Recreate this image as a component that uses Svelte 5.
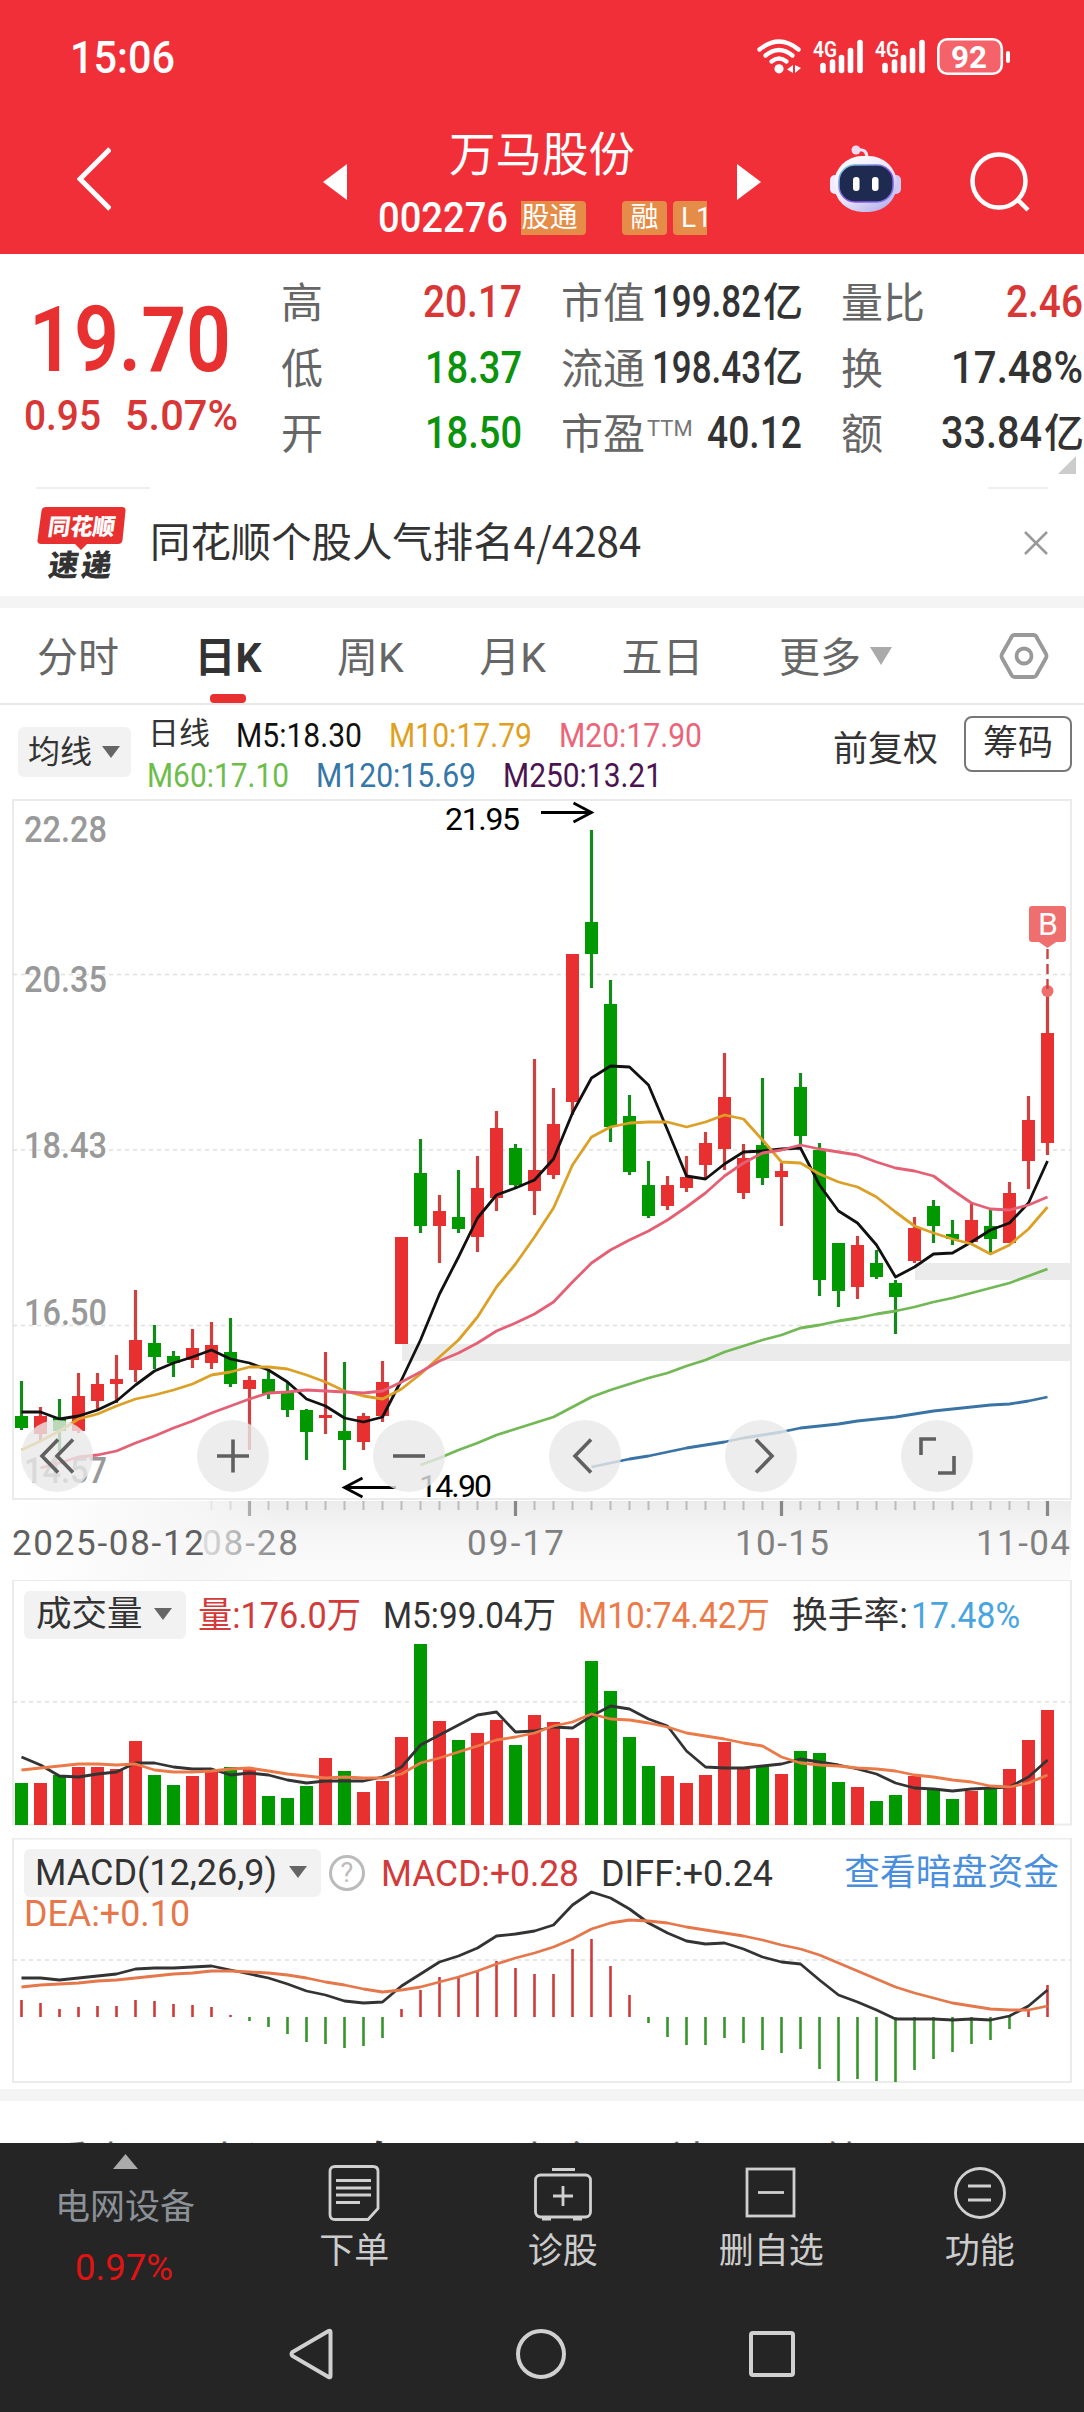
<script>
    const RED = '#e93030';
    const GREEN = '#009900';
    const STEP = 19;
    const START = 21.5;

    const stats = [
        [
            { label: '高', value: '20.17', width: 99, tone: 'red' },
            { label: '低', value: '18.37', width: 97, tone: 'green' },
            { label: '开', value: '18.50', width: 97, tone: 'green' },
        ],
        [
            { label: '市值', value: '199.82', width: 109, unit: '亿' },
            { label: '流通', value: '198.43', width: 109, unit: '亿' },
            { label: '市盈', sup: 'TTM', value: '40.12', width: 95 },
        ],
        [
            { label: '量比', value: '2.46', width: 77, tone: 'red' },
            { label: '换', value: '17.48%', width: 132 },
            { label: '额', value: '33.84', width: 101, unit: '亿' },
        ],
    ];

    const tabs = ['分时', '日K', '周K', '月K', '五日', '更多'];
    const infoTabs = ['看点', '资讯', '盘口', '资金', '社区', '简况(F10)'];

    const averages = [
        [
            { text: 'M5:18.30', width: 126, color: '#111111' },
            { text: 'M10:17.79', width: 143, color: '#e0a020' },
            { text: 'M20:17.90', width: 143, color: '#eb6478' },
        ],
        [
            { text: 'M60:17.10', width: 142, color: '#6dbd4b' },
            { text: 'M120:15.69', width: 160, color: '#3577a8' },
            { text: 'M250:13.21', width: 159, color: '#4b1450' },
        ],
    ];

    const priceLabels = [
        ['22.28', 43],
        ['20.35', 193],
        ['18.43', 359],
        ['16.50', 526],
        ['14.57', 684],
    ];

    // high, body top, body bottom, low, up
    const candles = [
        [582, 617, 629, 631, 0], [608, 617, 635, 641, 1], [600, 619, 632, 652, 0],
        [574, 597, 632, 634, 1], [574, 585, 602, 610, 1], [556, 580, 585, 604, 1],
        [491, 541, 571, 583, 1], [526, 544, 558, 570, 0], [552, 557, 564, 578, 0],
        [530, 549, 561, 569, 1], [523, 546, 564, 570, 1], [519, 553, 585, 588, 0],
        [577, 581, 590, 651, 1], [572, 580, 595, 600, 0], [584, 593, 611, 618, 0],
        [610, 611, 633, 661, 0], [553, 616, 619, 635, 1], [563, 632, 641, 671, 0],
        [614, 617, 643, 651, 1], [562, 583, 617, 623, 1], [438, 438, 545, 545, 1],
        [340, 374, 427, 434, 0], [396, 412, 427, 464, 1], [371, 418, 430, 434, 0],
        [357, 389, 438, 453, 1], [312, 329, 399, 412, 1], [345, 349, 386, 388, 0],
        [260, 371, 392, 416, 1], [289, 325, 376, 380, 1], [155, 155, 303, 316, 1],
        [31, 123, 155, 189, 0], [181, 205, 328, 343, 0], [296, 317, 373, 376, 0],
        [362, 386, 417, 419, 0], [377, 386, 407, 411, 1], [357, 378, 389, 393, 1],
        [333, 344, 366, 379, 1], [254, 298, 350, 371, 1], [345, 359, 394, 400, 1],
        [279, 346, 379, 386, 0], [364, 372, 378, 427, 1], [274, 288, 337, 345, 0],
        [344, 351, 481, 497, 0], [444, 444, 492, 508, 0], [437, 446, 488, 500, 1],
        [451, 464, 478, 480, 0], [481, 484, 498, 535, 0], [418, 429, 462, 464, 1],
        [401, 407, 427, 444, 0], [421, 435, 440, 446, 0], [403, 421, 443, 445, 1],
        [411, 427, 440, 454, 0], [383, 394, 444, 444, 1], [297, 321, 362, 390, 1],
        [193, 234, 344, 356, 1],
    ];

    const ma5 = [613, 613, 620, 617, 611, 602, 586, 572, 564, 558, 551, 560, 564, 571, 583, 600, 607, 619, 623, 618, 581, 541, 495, 458, 419, 396, 389, 381, 360, 314, 279, 267, 268, 286, 331, 377, 380, 365, 353, 352, 350, 349, 386, 412, 424, 446, 478, 468, 455, 454, 443, 431, 424, 404, 362];
    const ma10 = [651, 642, 632, 620, 615, 607, 600, 596, 591, 585, 576, 573, 568, 568, 570, 576, 583, 592, 597, 600, 590, 575, 558, 541, 518, 488, 465, 438, 409, 366, 338, 328, 324, 323, 323, 328, 323, 316, 320, 341, 363, 364, 375, 383, 388, 398, 413, 427, 434, 440, 445, 455, 446, 430, 408];
    const ma20 = [669, 664, 658, 656, 652, 644, 637, 629, 622, 614, 607, 600, 594, 593, 591, 592, 593, 594, 592, 583, 573, 562, 554, 544, 532, 524, 515, 503, 483, 464, 451, 441, 432, 421, 408, 394, 377, 364, 354, 351, 346, 350, 353, 356, 363, 369, 372, 377, 391, 404, 410, 411, 406, 398];
    const ma60 = [666, 659, 651, 644, 636, 630, 624, 618, 608, 598, 591, 585, 579, 574, 567, 561, 553, 547, 541, 536, 529, 526, 522, 519, 515, 512, 508, 503, 499, 494, 489, 484, 477, 470];
    const ma120 = [668, 664, 660, 657, 653, 649, 646, 643, 639, 636, 633, 629, 627, 625, 622, 620, 618, 615, 612, 610, 608, 606, 605, 602, 598];

    const volumes = [42, 42, 50, 58, 58, 56, 84, 50, 40, 49, 56, 58, 56, 29, 27, 39, 67, 54, 33, 44, 88, 181, 104, 85, 92, 105, 80, 110, 103, 87, 164, 134, 88, 59, 49, 42, 50, 83, 56, 59, 51, 74, 72, 43, 38, 24, 30, 49, 35, 26, 34, 36, 56, 85, 115];
    const vol5 = [177, 185, 196, 197, 194, 192, 183, 183, 187, 189, 189, 195, 193, 195, 200, 203, 201, 201, 201, 197, 187, 165, 155, 145, 135, 132, 152, 151, 147, 148, 136, 126, 129, 139, 146, 171, 187, 188, 188, 186, 184, 179, 182, 185, 189, 194, 203, 208, 209, 211, 209, 208, 207, 197, 180];
    const vol10 = [190, 188, 186, 184, 184, 185, 184, 190, 192, 192, 191, 189, 188, 191, 194, 196, 198, 197, 198, 198, 194, 183, 178, 172, 166, 160, 157, 153, 146, 142, 134, 139, 140, 143, 147, 153, 156, 159, 163, 166, 177, 183, 185, 186, 188, 189, 191, 195, 197, 200, 202, 206, 207, 203, 195];

    const macd = [17, 14, 8, 10, 11, 11, 17, 16, 13, 12, 10, 2, -4, -10, -17, -25, -27, -31, -29, -21, 8, 27, 40, 41, 45, 56, 49, 43, 43, 68, 78, 51, 22, -6, -20, -28, -28, -21, -26, -33, -36, -32, -52, -64, -62, -64, -65, -53, -42, -35, -27, -23, -12, 7, 32];
    const diff = [140, 140, 142, 140, 138, 136, 131, 130, 130, 129, 128, 132, 136, 140, 146, 153, 157, 163, 165, 164, 148, 136, 124, 118, 110, 98, 96, 93, 87, 67, 54, 60, 71, 85, 95, 103, 106, 105, 111, 119, 124, 126, 142, 157, 164, 172, 181, 181, 181, 182, 181, 182, 178, 168, 152];
    const dea = [149, 147, 146, 145, 143, 142, 140, 138, 136, 135, 133, 133, 134, 135, 137, 140, 144, 147, 151, 154, 152, 149, 144, 139, 133, 126, 120, 115, 109, 101, 91, 85, 82, 83, 85, 89, 92, 95, 98, 102, 107, 111, 117, 125, 133, 141, 149, 155, 160, 165, 168, 171, 172, 172, 168];

    const dates = [
        { text: '08-28', x: 202, width: 96 },
        { text: '09-17', x: 467, width: 97 },
        { text: '10-15', x: 735, width: 94 },
        { text: '11-04', x: 976, width: 94 },
    ];

    const x = (i) => START + STEP * i;
    const color = (up) => (up ? RED : GREEN);
    // averages with a long window start later, so they are aligned to the right
    const line = (ys) =>
        ys.map((y, i) => `${x(i + candles.length - ys.length)},${y}`).join(' ');
</script>

{#snippet fit(text, width, size, fill = 'currentColor', weight = 400)}
    <svg class="fit" {width} height={size * 0.72}>
        <text
            x="-1"
            y={size * 0.715}
            textLength={width}
            lengthAdjust="spacingAndGlyphs"
            font-size={size}
            font-weight={weight}
            {fill}>{text}</text
        >
    </svg>
{/snippet}

{#snippet caret(width = 18, height = 12)}
    <svg class="caret" {width} {height} viewBox="0 0 18 12" preserveAspectRatio="none">
        <path d="M0 0h18L9 12z" fill="currentColor" />
    </svg>
{/snippet}

<div class="screen">
    <header>
        <div class="status">
            {@render fit('15:06', 105, 45, '#fff', 500)}
            <svg width="256" height="40" viewBox="755 36 256 40" fill="none" stroke="#fff">
                <g stroke-width="4.4" stroke-linecap="round">
                    <path d="M759.5 48.5Q779 32.5 798.5 48.5" />
                    <path d="M765.5 54.5Q779 43.5 792.5 54.5" />
                    <path d="M771.5 60.5Q779 54.5 786.5 60.5" />
                </g>
                <circle cx="779" cy="67.8" r="4.6" fill="#fff" stroke="none" />
                <path d="M793 64v8l-6-3.5zM795 64v8l6-5z" fill="#fff" stroke="none" />
                {#each [0, 62] as dx}
                    <g stroke-width="5.6" stroke-linecap="round">
                        <path d="M{823 + dx} 64.5v5" />
                        <path d="M{832.5 + dx} 61v8.5" />
                        <path d="M{841.5 + dx} 56.5v13" />
                        <path d="M{850.5 + dx} 49.5v20" />
                        <path d="M{860 + dx} 41.5v28" />
                    </g>
                    <text
                        x={813 + dx}
                        y="55.5"
                        font-size="22.5"
                        font-weight="600"
                        fill="#fff"
                        stroke="none"
                        textLength="24"
                        lengthAdjust="spacingAndGlyphs">4G</text
                    >
                {/each}
                <rect x="938.3" y="38.3" width="63.5" height="34.5" rx="9" stroke-width="2.6" fill="#f5626a" />
                <path d="M1008 52v8" stroke-width="4" stroke-linecap="round" />
                <text
                    x="951"
                    y="66.5"
                    font-size="32"
                    font-weight="700"
                    fill="#fff"
                    stroke="none"
                    textLength="36"
                    lengthAdjust="spacingAndGlyphs">92</text
                >
            </svg>
        </div>
        <div class="title-bar">
            <svg class="back" width="34" height="66" viewBox="0 0 34 66" fill="none" stroke="#fff" stroke-width="5">
                <path d="M33 3L3 33l30 30" />
            </svg>
            <svg class="prev" width="24" height="36"><path d="M24 0v36L0 18z" fill="#fff" /></svg>
            <div class="stock">
                <h1>万马股份</h1>
                <div class="code">
                    {@render fit('002276', 130, 42, '#fff', 500)}
                    <div class="tags">
                        <span class="tag cut">股通</span>
                        <span class="tag">融</span>
                        <span class="tag level">L1</span>
                    </div>
                </div>
            </div>
            <svg class="next" width="24" height="36"><path d="M0 0v36l24-18z" fill="#fff" /></svg>
            <svg class="robot" width="73" height="68" viewBox="0 0 73 68">
                <defs>
                    <linearGradient id="shell" x1="0" y1="0" x2="0.7" y2="1">
                        <stop offset="0" stop-color="#fff" />
                        <stop offset="0.6" stop-color="#ebe6fb" />
                        <stop offset="1" stop-color="#b9b5ee" />
                    </linearGradient>
                    <linearGradient id="rim" x1="0" y1="0" x2="1" y2="1">
                        <stop offset="0" stop-color="#6fd0e8" />
                        <stop offset="0.6" stop-color="#8a4be0" />
                        <stop offset="1" stop-color="#7a7df0" />
                    </linearGradient>
                </defs>
                <path d="M28 5q10-2 10 8" fill="none" stroke="#f0e6fa" stroke-width="3" />
                <circle cx="27" cy="5" r="4.5" fill="#f0dcf2" />
                <rect x="1" y="30" width="14" height="19" rx="5" fill="#efeaff" />
                <rect x="58" y="30" width="14" height="19" rx="5" fill="#cfcaf5" />
                <rect x="5" y="11" width="63" height="56" rx="28" fill="url(#shell)" />
                <rect x="10" y="20" width="54" height="37" rx="16" fill="#1e2a50" stroke="url(#rim)" stroke-width="1.5" />
                <rect x="24" y="32" width="6.5" height="14" rx="3" fill="#fff" />
                <rect x="43" y="32" width="6.5" height="14" rx="3" fill="#fff" />
            </svg>
            <svg class="search" width="60" height="60" fill="none" stroke="#fff" stroke-width="4.5">
                <circle cx="29" cy="29" r="26.5" />
                <path d="M47.5 47.5L58 58" />
            </svg>
        </div>
    </header>

    <section class="quote">
        <div class="price">
            {@render fit('19.70', 202, 91, RED, 600)}
            <div class="change">
                {@render fit('0.95', 77, 43, 'currentColor', 500)}
                {@render fit('5.07%', 113, 43, 'currentColor', 500)}
            </div>
        </div>
        {#each stats as column}
            <div class="stats">
                {#each column as row}
                    <div class="stat">
                        <span class="label">{row.label}</span>
                        {#if row.sup}
                            <sup>{row.sup}</sup>
                        {/if}
                        <span class="value {row.tone ?? ''}">
                            {@render fit(row.value, row.width, 43.5, 'currentColor', 500)}
                            {#if row.unit}<span class="unit">{row.unit}</span>{/if}
                        </span>
                    </div>
                {/each}
            </div>
        {/each}
        <svg class="fold" width="18" height="18"><path d="M18 0v18H0z" fill="#ccc" /></svg>
    </section>

    <div class="rules"><span></span><span></span></div>

    <section class="news">
        <svg width="90" height="72" viewBox="0 0 90 72">
            <path d="M9 0h76q4 0 3.500 4l-3 29q-.5 4-4.500 4H50l-6 6-6-6H4q-4 0-3.500-4l4-29Q5 0 9 0z" fill={RED} />
            <g transform="skewX(-8)" font-weight="900">
                <text x="14" y="28" font-size="23" fill="#fff" textLength="67" lengthAdjust="spacingAndGlyphs">同花顺</text>
                <text x="20" y="69" font-size="30" fill="#333" textLength="63">速递</text>
            </g>
        </svg>
        <p>同花顺个股人气排名4/4284</p>
        <svg class="close" width="24" height="24" stroke="#999" stroke-width="2.5">
            <path d="M1 1l22 22M23 1L1 23" />
        </svg>
    </section>

    <div class="band"></div>

    <nav class="tabs">
        {#each tabs as tab}
            <span class="tab" class:active={tab === '日K'}>
                {tab}
                {#if tab === '更多'}
                    {@render caret(22, 18)}
                {/if}
            </span>
        {/each}
        <svg class="hex" width="50" height="46" fill="none" stroke="#999" stroke-width="3.8">
            <path d="M15.500 2h19q2 0 3 2l9.500 17q1 2 0 4L37.500 42q-1 2-3 2h-19q-2 0-3-2L3 25q-1-2 0-4l9.500-17q1-2 3-2z" />
            <circle cx="25" cy="23" r="7.5" />
        </svg>
    </nav>

    <div class="indicators">
        <span class="pill ma">均线 {@render caret()}</span>
        <div class="averages">
            {#each averages as row, i}
                <div class="row">
                    {#if i === 0}<span class="period">日线</span>{/if}
                    {#each row as item}
                        {@render fit(item.text, item.width, 33, item.color)}
                    {/each}
                </div>
            {/each}
        </div>
        <span class="adjust">前复权</span>
        <button type="button">筹码</button>
    </div>

    <section class="panel">
        <svg width="1084" height="702">
            <rect class="frame" x="13" y="1" width="1058" height="699" />
            <g class="grid">
                <path d="M13 175.500H1071M13 351H1071M13 526.500H1071" />
            </g>
            <rect x="402" y="545" width="669" height="17" fill="#ebebeb" />
            <rect x="915" y="464" width="156" height="17" fill="#ebebeb" />
            {#each priceLabels as [text, y]}
                <text class="scale" x="24" {y} textLength="83" lengthAdjust="spacingAndGlyphs">{text}</text>
            {/each}
            {#each candles as [high, top, bottom, low, up], i}
                <path d="M{x(i)} {high}V{low}" stroke={up ? '#cf4040' : '#158a1c'} stroke-width="3.2" />
                <rect x={x(i) - 6.5} y={top} width="13" height={bottom - top} fill={color(up)} />
            {/each}
            <g class="lines">
                <polyline points={line(ma120)} stroke="#3a74a5" />
                <polyline points={line(ma60)} stroke="#72b855" />
                <polyline points={line(ma5)} stroke="#111" />
                <polyline points={line(ma10)} stroke="#dba025" />
                <polyline points={line(ma20)} stroke="#e56075" />
            </g>
            <g fill="none" stroke="#000" stroke-width="2.8">
                <path d="M541 13.500h51M573.500 4l18 9.500-18 9.500" />
                <path d="M396 688.500h-51M362.500 679l-18 9.500 18 9.500" />
            </g>
            <text class="mark" x="445" y="31" textLength="75">21.95</text>
            <text class="mark" x="419" y="698" textLength="73">14.90</text>
            <g fill="#ef6e6e">
                <rect x="1029" y="107" width="37" height="36" rx="3" />
                <path d="M1039 143h17l-8.500 6z" />
                <circle cx="1047.5" cy="192" r="6" />
            </g>
            <path d="M1047.500 150V192" stroke="#cf4040" stroke-width="2.4" stroke-dasharray="10 5" />
            <text x="1048" y="135.5" font-size="32" fill="#fff" text-anchor="middle">B</text>
        </svg>
        <div class="controls">
            <span>
                <svg width="36" height="36"><path d="M19 1.500L3 18l16 16.500M34 1.500L18 18l16 16.500" /></svg>
            </span>
            <span><svg width="36" height="36"><path d="M2 18h32M18 1.500v33" /></svg></span>
            <span><svg width="36" height="36"><path d="M2 18h32" /></svg></span>
            <span><svg width="36" height="36"><path d="M24 1.500L8 18l16 16.500" /></svg></span>
            <span><svg width="36" height="36"><path d="M13 1.500L29 18 13 34.500" /></svg></span>
            <span><svg width="38" height="38"><path d="M18 2H3v16M36 19v17H20" /></svg></span>
        </div>
    </section>

    <svg class="axis" width="1084" height="79">
        <defs>
            <linearGradient id="shade" x1="0" y1="0" x2="0" y2="1">
                <stop offset="0" stop-color="#ececec" />
                <stop offset="0.5" stop-color="#f7f7f7" />
                <stop offset="1" stop-color="#fbfbfb" />
            </linearGradient>
            <linearGradient id="fade">
                <stop offset="0" stop-color="#fff" />
                <stop offset="0.58" stop-color="#f7f7f7" />
                <stop offset="0.7" stop-color="#f7f7f7" stop-opacity="0.8" />
                <stop offset="1" stop-color="#f7f7f7" stop-opacity="0" />
            </linearGradient>
        </defs>
        <rect x="13" width="1058" height="79" fill="url(#shade)" />
        {#each candles as _, i}
            {#if i > 9}
                <path
                    d="M{x(i)} 0V{i % 14 === 12 ? 15 : 9}"
                    stroke={i % 14 === 12 ? '#888' : '#bbb'}
                    stroke-width={i % 14 === 12 ? 3.2 : 2}
                />
            {/if}
        {/each}
        {#each dates as date}
            <text class="date" x={date.x} y="53.5" textLength={date.width}>{date.text}</text>
        {/each}
        <rect x="13" width="270" height="79" fill="url(#fade)" />
        <text class="date first" x="12" y="53.5" textLength="192">2025-08-12</text>
    </svg>

    <section class="panel volume">
        <svg width="1084" height="246">
            <rect class="frame" x="13" y="0" width="1058" height="244.5" />
            <path class="grid" d="M13 122H1071" />
            {#each volumes as height, i}
                <rect x={x(i) - 6.5} y={245 - height} width="13" {height} fill={color(candles[i][4])} />
            {/each}
            <g class="lines">
                <polyline points={line(vol5)} stroke="#333" />
                <polyline points={line(vol10)} stroke="#ec7a48" />
            </g>
        </svg>
        <div class="legend">
            <span class="pill">成交量 {@render caret()}</span>
            {@render fit('量:176.0万', 163, 36, '#d33a3a')}
            {@render fit('M5:99.04万', 173, 36)}
            {@render fit('M10:74.42万', 192, 36, '#ec7a48')}
            <span class="turnover">
                {@render fit('换手率:', 116, 36)}
                {@render fit('17.48%', 109, 36, '#48a5e0')}
            </span>
        </div>
    </section>

    <section class="panel">
        <svg width="1084" height="245">
            <rect class="frame" x="13" y="0.5" width="1058" height="243.5" />
            <path class="grid" d="M13 122H1071" />
            {#each macd as value, i}
                <path
                    d="M{x(i)} 179v{-value}"
                    stroke={value > 0 ? '#cf3a3a' : '#35942a'}
                    stroke-width="2.6"
                />
            {/each}
            <g class="lines">
                <polyline points={line(diff)} stroke="#333" />
                <polyline points={line(dea)} stroke="#e5774a" />
            </g>
        </svg>
        <div class="legend">
            <span class="pill">{@render fit('MACD(12,26,9)', 242, 36)} {@render caret()}</span>
            <span class="help">?</span>
            {@render fit('MACD:+0.28', 198, 36, '#d33a3a')}
            {@render fit('DIFF:+0.24', 172, 36)}
            <a href="#funds">查看暗盘资金</a>
            <div class="dea">{@render fit('DEA:+0.10', 166, 36, '#e5774a')}</div>
        </div>
    </section>

    <div class="band low"></div>

    <div class="info-tabs">
        {#each infoTabs as tab}
            <span class:bold={tab === '盘口'}>{tab}</span>
        {/each}
    </div>

    <footer>
        <div class="actions">
            <div class="sector">
                <svg width="25" height="15"><path d="M12.500 0L25 15H0z" fill="#aaa" /></svg>
                <span>电网设备</span>
                {@render fit('0.97%', 98, 37, '#e01414')}
            </div>
            <div class="action">
                <svg width="60" height="58">
                    <path d="M11 2.500h38q5 0 5 5v37L44 55.500H11q-5 0-5-5v-43q0-5 5-5z" />
                    <path d="M12 16.500h35M12 24h35M12 31h35M12 38.500h24" />
                </svg>
                <span>下单</span>
            </div>
            <div class="action">
                <svg width="60" height="58">
                    <path d="M19 5.500h23M9 55h9M40 55h9" />
                    <rect x="2.5" y="11" width="55" height="42" rx="5" />
                    <path d="M30 22v20M20 32h20" />
                </svg>
                <span>诊股</span>
            </div>
            <div class="action">
                <svg width="60" height="58">
                    <rect x="6" y="5" width="47" height="47" />
                    <path d="M17 28.500h26" />
                </svg>
                <span>删自选</span>
            </div>
            <div class="action">
                <svg width="60" height="58">
                    <circle cx="30" cy="29" r="24.5" />
                    <path d="M18 22h23M18 36h23" />
                </svg>
                <span>功能</span>
            </div>
        </div>
        <div class="system">
            <svg width="44" height="52"><path d="M41.500 4v44q0 2-2 1L3.500 28q-2-2 0-4L39.500 3q2-1 2 1z" /></svg>
            <svg width="50" height="50"><circle cx="25" cy="25" r="23" /></svg>
            <svg width="46" height="48"><rect x="2" y="3" width="42" height="42" rx="2" /></svg>
        </div>
    </footer>
</div>

<style>
    :global(body) {
        margin: 0;
        background: #fff;
    }

    .screen {
        width: 1084px;
        height: 2412px;
        overflow: hidden;
        background: #fff;
        color: #333;
        font-family: Roboto, 'Noto Sans CJK SC', sans-serif;
    }

    svg {
        display: block;
        flex: none;
    }

    .fit {
        overflow: visible;
    }

    header {
        background: #f12f38;
        height: 254px;
    }

    .status {
        align-items: center;
        box-sizing: border-box;
        display: flex;
        height: 114px;
        justify-content: space-between;
        padding: 0 73px 0 71px;
    }

    .title-bar {
        align-items: center;
        box-sizing: border-box;
        display: flex;
        height: 140px;
        padding: 0 0 10px 77px;
    }

    .prev {
        margin: 6px 32px 0 212px;
    }

    .stock {
        width: 328px;
    }

    h1 {
        color: #fff;
        font-size: 46.5px;
        font-weight: 400;
        line-height: 62px;
        margin: 0 2px 0 0;
        text-align: center;
    }

    .code {
        align-items: center;
        display: flex;
        gap: 12px;
        height: 34px;
        margin-top: 15px;
    }

    .tags {
        display: flex;
        height: 34px;
        overflow: hidden;
        width: 186px;
    }

    .tag {
        background: #e58c48;
        border-radius: 4px;
        box-sizing: border-box;
        color: #fff;
        flex: none;
        font-size: 28px;
        line-height: 34px;
        margin-right: 6px;
        text-align: center;
        width: 45px;
    }

    .tag.cut {
        border-radius: 0 4px 4px 0;
        margin-right: 36px;
        padding-right: 8px;
        width: 65px;
    }

    .tag.level {
        padding-left: 8px;
        text-align: left;
        width: 56px;
    }

    .next {
        margin: 6px 68px 0 30px;
    }

    .search {
        margin: 6px 0 0 68px;
    }

    .quote {
        display: flex;
        height: 233px;
        position: relative;
    }

    .price {
        box-sizing: border-box;
        color: #d93636;
        padding: 52px 0 0 30px;
        width: 281px;
    }

    .change {
        display: flex;
        gap: 24px;
        margin: 27px 0 0 -5px;
    }

    .stats {
        margin-right: 38px;
        padding-top: 15px;
        width: 242px;
    }

    .stats:nth-of-type(4) {
        flex: 1;
        margin-right: 0;
    }

    .stat {
        align-items: center;
        display: flex;
        height: 65.5px;
        line-height: 60px;
    }

    .label {
        color: #666;
        font-size: 42px;
        margin-top: 5px;
    }

    sup {
        color: #777;
        font-size: 22px;
        height: 60px;
        line-height: 52px;
        margin-left: 2px;
    }

    .value {
        align-items: center;
        display: flex;
        font-size: 40px;
        font-weight: 500;
        gap: 1px;
        margin-left: auto;
    }

    .unit {
        margin-top: 2px;
    }

    .red {
        color: #d93636;
    }

    .green {
        color: #0c930c;
    }

    .fold {
        bottom: 13px;
        position: absolute;
        right: 8px;
    }

    .rules {
        display: flex;
        height: 2px;
        justify-content: space-between;
        padding: 0 36px;
    }

    .rules span {
        background: #eee;
        width: 60px;
    }

    .rules span:first-child {
        width: 114px;
    }

    .news {
        align-items: center;
        box-sizing: border-box;
        display: flex;
        height: 107px;
        padding: 0 36px 0 37px;
    }

    .news p {
        font-family: 'Noto Sans CJK SC', sans-serif;
        font-size: 40.4px;
        line-height: 60px;
        margin: 0 auto 5px 23px;
    }

    .band {
        background: #f4f4f4;
        height: 12px;
    }

    .tabs {
        align-items: center;
        border-bottom: 2px solid #e8e8e8;
        color: #666;
        display: flex;
        font-size: 41px;
        gap: 75.5px;
        height: 95px;
        padding: 0 35px 0 37px;
    }

    .tab {
        align-items: center;
        box-sizing: border-box;
        display: flex;
        gap: 9px;
        height: 95px;
        padding-bottom: 4px;
        position: relative;
    }

    .tab .caret {
        color: #aaa;
        margin-top: 4px;
    }

    .tab.active {
        color: #333;
        font-weight: 700;
    }

    .tab.active::after {
        background: #e93030;
        border-radius: 4px;
        bottom: 0;
        content: '';
        height: 9px;
        left: 50%;
        margin-left: -18px;
        position: absolute;
        width: 36px;
    }

    .hex {
        margin-left: auto;
    }

    .indicators {
        box-sizing: border-box;
        display: flex;
        height: 94px;
        padding: 11px 12px 0 18px;
    }

    .pill {
        align-items: center;
        background: #f2f2f2;
        border-radius: 6px;
        box-sizing: border-box;
        display: flex;
        font-size: 35.5px;
        gap: 11px;
        height: 48px;
        line-height: 44px;
        padding: 0 14px 2px 12px;
    }

    .pill.ma {
        font-size: 32px;
        gap: 10px;
        height: 50px;
        margin-top: 11px;
        padding: 0 11px 0 10px;
        width: 113px;
    }

    .caret {
        color: #666;
    }

    .averages {
        margin: -1px 0 0 17px;
    }

    .row {
        align-items: center;
        display: flex;
        gap: 27px;
        height: 40px;
    }

    .period {
        font-size: 31px;
        line-height: 36px;
        margin-bottom: 3px;
    }

    .adjust {
        font-size: 35px;
        line-height: 68px;
        margin-left: auto;
        margin-right: 26px;
    }

    button {
        background: #fff;
        border: 2px solid #777;
        border-radius: 8px;
        color: #333;
        font-family: inherit;
        font-size: 35px;
        height: 56px;
        line-height: 50px;
        padding: 0;
        width: 108px;
    }

    .panel {
        display: grid;
    }

    .panel > * {
        grid-area: 1 / 1;
    }

    .frame {
        fill: none;
        stroke: #ebebeb;
        stroke-width: 2;
    }

    .grid {
        stroke: #e0e0e0;
        stroke-dasharray: 4 4;
        stroke-width: 1.4;
    }

    .lines {
        fill: none;
        stroke-linejoin: round;
        stroke-width: 2.8;
    }

    .scale {
        fill: #999;
        font-size: 36px;
        font-weight: 500;
    }

    .mark {
        fill: #000;
        font-size: 32px;
    }

    .controls {
        align-self: start;
        display: flex;
        gap: 104px;
        padding: 621px 0 0 21px;
    }

    .controls span {
        background: rgba(232, 232, 232, 0.8);
        border-radius: 50%;
        display: grid;
        height: 72px;
        place-items: center;
        width: 72px;
    }

    .controls svg {
        fill: none;
        stroke: #606060;
        stroke-width: 3.6;
    }

    .date {
        fill: #808080;
        font-size: 35px;
        font-weight: 400;
    }

    .date.first {
        fill: #606060;
    }

    .volume {
        margin-bottom: 12px;
    }

    .legend {
        align-content: start;
        align-items: center;
        display: flex;
        flex-wrap: wrap;
        gap: 0 22px;
        padding: 11px 25px 0 24px;
    }

    .legend .pill {
        margin-right: -9px;
    }

    .turnover {
        display: flex;
        gap: 3px;
    }

    .help {
        border: 3px solid #bbb;
        border-radius: 50%;
        box-sizing: border-box;
        color: #bbb;
        font-size: 27px;
        height: 36px;
        line-height: 30px;
        margin: 0 -5px 0 -5px;
        text-align: center;
        width: 36px;
    }

    .legend a {
        color: #4a8fdd;
        font-size: 35.8px;
        line-height: 48px;
        margin-left: auto;
        text-decoration: none;
    }

    .dea {
        padding: 3px 0 0 1px;
        width: 100%;
    }

    .band.low {
        margin-top: 6px;
    }

    .info-tabs {
        color: #666;
        display: flex;
        font-size: 42px;
        gap: 71px;
        height: 42px;
        line-height: 124px;
        overflow: hidden;
        padding-left: 48px;
        white-space: nowrap;
    }

    .bold {
        color: #333;
        font-weight: 700;
    }

    footer {
        background: #252525;
        height: 269px;
    }

    .actions {
        display: flex;
        height: 160px;
    }

    .sector {
        align-items: center;
        color: #8b9196;
        display: flex;
        flex-direction: column;
        font-size: 35px;
        padding-top: 11px;
        width: 250px;
    }

    .sector span {
        line-height: 50px;
        margin: 14px 0 21px;
    }

    .action {
        align-items: center;
        color: #ccc;
        display: flex;
        flex: 1;
        flex-direction: column;
        font-size: 35px;
        line-height: 50px;
        padding-top: 21px;
    }

    .action span {
        margin-top: 5px;
    }

    .action svg,
    .system svg {
        fill: none;
        stroke: #d0d0d0;
        stroke-width: 2.8;
    }

    .system {
        align-items: center;
        display: flex;
        gap: 183px;
        height: 102px;
        padding-left: 289px;
    }

    .system svg {
        stroke-width: 4;
    }
</style>
